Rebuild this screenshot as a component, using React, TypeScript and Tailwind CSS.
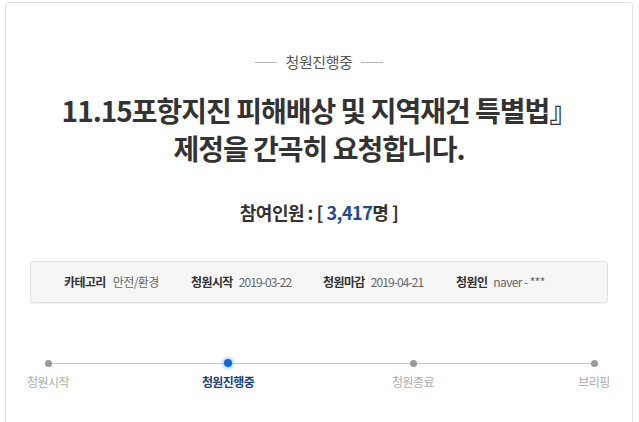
import React from 'react';

const font = { fontFamily: '"Noto Sans CJK KR", "Noto Sans", sans-serif' };

const steps = [
  { label: '청원시작', active: false },
  { label: '청원진행중', active: true },
  { label: '청원종료', active: false },
  { label: '브리핑', active: false },
];

export default function App() {
  return (
    <div className="w-[639px] h-[422px] overflow-hidden bg-white" style={font}>
      <div className="ml-[5px] mt-[2px] w-[628px] h-[440px] border border-[#e3e3e3] rounded-t-[3px] bg-white">
        {/* status */}
        <div className="mt-[46px] flex items-center justify-center gap-[8px]">
          <span className="w-[22px] h-px bg-[#b5b5b5]" />
          <span className="text-[15px] leading-[26px] text-[#555] tracking-[-0.4px]">청원진행중</span>
          <span className="w-[22px] h-px bg-[#b5b5b5]" />
        </div>

        {/* title */}
        <h1 className="mt-[16px] text-center text-[28px] leading-[38px] font-bold text-[#333] tracking-[-1px]">
          11.15포항지진 피해배상 및 지역재건 특별법』
          <br />
          제정을 간곡히 요청합니다.
        </h1>

        {/* count */}
        <div className="mt-[33px] text-center text-[18px] leading-[24px] font-bold text-[#333] tracking-[-0.5px]">
          참여인원 : [ <span className="text-[#1e4a9c]">3,417</span>명 ]
        </div>

        {/* info box */}
        <div className="mt-[37px] mx-[24px] h-[42px] rounded-[3px] border border-[#e2e2e2] bg-[#f6f6f6] shadow-[0_1px_1px_rgba(0,0,0,0.06)] flex items-center pl-[33px] text-[12px] tracking-[-0.6px]">
          <div className="flex items-center w-[127px]">
            <span className="font-bold text-[#333]">카테고리</span>
            <span className="ml-[7px] text-[#666]">안전/환경</span>
          </div>
          <div className="flex items-center w-[132px]">
            <span className="font-bold text-[#333]">청원시작</span>
            <span className="ml-[6px] text-[#666] tracking-[-0.9px]">2019-03-22</span>
          </div>
          <div className="flex items-center w-[133px]">
            <span className="font-bold text-[#333]">청원마감</span>
            <span className="ml-[6px] text-[#666] tracking-[-0.9px]">2019-04-21</span>
          </div>
          <div className="flex items-center">
            <span className="font-bold text-[#333]">청원인</span>
            <span className="ml-[6px] text-[#666]">naver - ***</span>
          </div>
        </div>

        {/* progress */}
        <div className="relative mt-[49px] ml-[12px] w-[606px] h-[50px]">
          <div className="absolute left-[30px] w-[546px] top-[11px] h-px bg-[#c8c8c8]" />
          <div className="relative flex">
            {steps.map((s, i) => (
              <div
                key={s.label}
                className={`flex flex-col items-center w-[60px] ${
                  i === 1 ? 'ml-[120px]' : i === 2 ? 'ml-[125px]' : i === 3 ? 'ml-[121px]' : ''
                }`}
              >
                <div className="h-[22px] flex items-center justify-center">
                  {s.active ? (
                    <span className="w-[8px] h-[8px] rounded-full bg-[#1565d8] shadow-[0_0_3px_2px_rgba(90,170,255,0.45)]" />
                  ) : (
                    <span className="w-[7px] h-[7px] rounded-full bg-[#9a9a9a]" />
                  )}
                </div>
                <span
                  className={`-mt-[1px] whitespace-nowrap text-[12px] leading-[18px] tracking-[-0.6px] ${
                    s.active ? 'font-bold text-[#1e3f7a]' : 'text-[#aaa]'
                  }`}
                >
                  {s.label}
                </span>
              </div>
            ))}
          </div>
        </div>
      </div>
    </div>
  );
}
